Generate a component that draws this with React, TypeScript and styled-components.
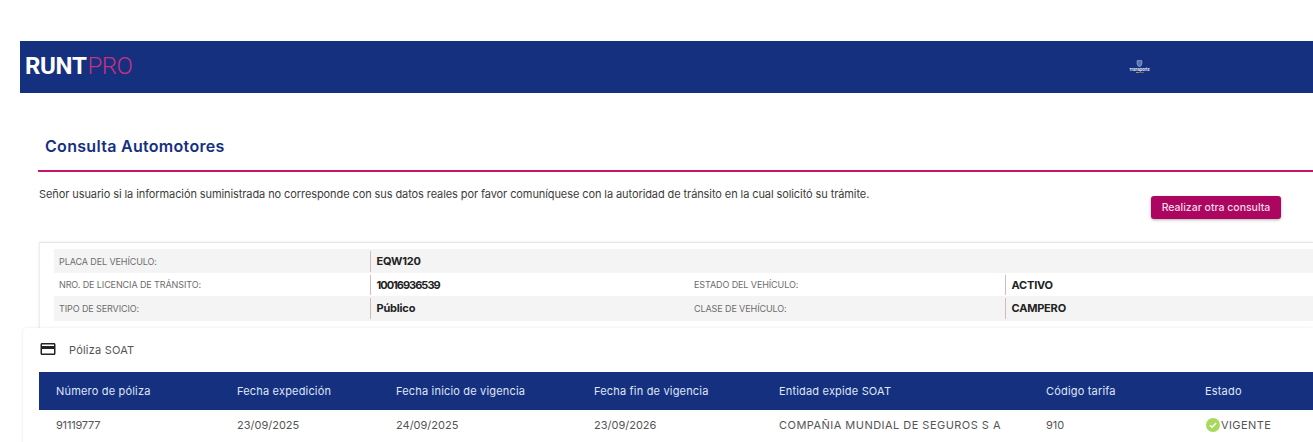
import React from "react";
import styled, { createGlobalStyle } from "styled-components";

const Global = createGlobalStyle`
  html, body { margin: 0; padding: 0; background: #fff; overflow: hidden; }
  body { font-family: Inter, "Open Sans", "Liberation Sans", sans-serif; color: #333; }
`;
const Page = styled.div`
  width: 1313px; height: 442px; overflow: hidden; padding-top: 41px; box-sizing: border-box;
`;
const Header = styled.header`
  margin-left: 20px; height: 52px; background: #163080; display: flex; align-items: center; padding-left: 5px;
`;
const Logo = styled.div`
  font-family: Roboto, sans-serif; font-size: 24px; line-height: 1; width: 1104px; letter-spacing: -0.3px; color: #fff; font-weight: 700; margin-top: -3px;
  span { color: #c8317f; font-weight: 300; letter-spacing: -0.5px; margin-left: 1px; }
`;
const Brand = styled.div`
  display: flex; flex-direction: column; align-items: center; width: 21px; color: #f0f3fb; margin-top: -1px;
  svg { display: block; }
  span { font-size: 3.8px; line-height: 5px; white-space: nowrap; font-weight: 700; }
`;
const Main = styled.main`
  padding: 43px 0 0 38px;
`;
const Title = styled.h1`
  margin: 0 0 0 7px; font-size: 16px; line-height: 20px; font-weight: 600; color: #163080; letter-spacing: 0.3px;
`;
const Rule = styled.div`
  height: 2px; background: #c4156e; margin-top: 14px;
`;
const Notice = styled.div`
  display: flex; padding-left: 1px; height: 70px;
`;
const NoticeText = styled.p`
  margin: 15px 0 0; width: 1112px; font-size: 11px; line-height: 14px; color: #3c3c3c; letter-spacing: -0.09px; white-space: nowrap;
`;
const Action = styled.button`
  margin-top: 24px; width: 130px; height: 23px; padding: 0; border: 0; border-radius: 3px; background: #ad0660; color: #f3dbe8;
  font: 500 10.5px/23px Inter, sans-serif; letter-spacing: 0; box-shadow: 0 1px 3px rgba(0,0,0,.3);
`;
const Card = styled.section`
  margin-left: 1px; height: 86px; border-top: 1px solid #e6e6e6; border-left: 1px solid #eee; padding: 6px 0 0 14px; box-sizing: border-box;
  box-shadow: 0 0 3px rgba(0,0,0,.08);
`;
const Row = styled.div<{ $shaded?: boolean; $h: number; $pb?: number }>`
  display: grid; grid-template-columns: 316px 319px 316px 1fr; height: ${(p) => p.$h}px; align-items: stretch; box-sizing: border-box;
  padding-bottom: ${(p) => p.$pb ?? 0}px;
  background: ${(p) => (p.$shaded ? "#f4f4f4" : "#fff")};
`;
const Label = styled.div`
  padding-left: 5px; font-size: 9px; color: #6d6d6d; display: flex; align-items: center; letter-spacing: -0.1px; white-space: nowrap;
`;
const Value = styled.div<{ $tight?: boolean }>`
  margin: 1.5px 0; padding-left: 5.5px; border-left: 1px solid #d6b9bd; font-size: 11px; font-weight: 700; color: #222; display: flex; align-items: center; white-space: nowrap;
  letter-spacing: ${(p) => (p.$tight ? "-1px" : "-0.2px")};
`;
const Policy = styled.section`
  margin: 0 0 0 -15px; padding: 0 0 30px 16px; border-radius: 4px 0 0 0; background: #fff; box-shadow: 0 0 3px rgba(0,0,0,.1); position: relative;
`;
const PolicyHead = styled.div`
  height: 44px; display: flex; align-items: center; gap: 12px; font-size: 11px; color: #555; letter-spacing: .2px;
  svg { display: block; margin-top: -3px; }
`;
const Table = styled.table`
  border-collapse: collapse; table-layout: fixed; width: 1274px; font-size: 11px;
`;
const Th = styled.th`
  height: 38px; padding: 0 0 0 17px; background: #163080; color: #dfe6f5; font-weight: 400; text-align: left; letter-spacing: .18px; white-space: nowrap;
`;
const Td = styled.td<{ $spacing?: number }>`
  height: 30px; padding: 0 0 0 17px; color: #555; letter-spacing: ${(p) => p.$spacing ?? 0}px; white-space: nowrap;
`;
const Status = styled.span`
  display: flex; align-items: center; gap: 1px; margin-left: 1px; letter-spacing: .4px;
  svg { display: block; }
`;

const widths = [181, 159, 198, 185, 267, 159, 125];
const heads = ["Número de póliza", "Fecha expedición", "Fecha inicio de vigencia", "Fecha fin de vigencia", "Entidad expide SOAT", "Código tarifa", "Estado"];

export default function App() {
  return (
    <Page>
      <Global />
      <Header>
        <Logo>RUNT<span>PRO</span></Logo>
        <Brand>
          <svg width="7" height="7" viewBox="0 0 8 9"><path d="M1 1 L4 0 L7 1 V5 Q6 8 4 9 Q2 8 1 5Z" fill="#5a72b4" stroke="#b9c5e2" strokeWidth=".8" /></svg>
          <span>Transporte</span>
          <svg width="8" height="1" viewBox="0 0 8 1"><rect width="3" height="1" fill="#a89a3c" /><rect x="3" width="2" height="1" fill="#4a6aa8" /><rect x="5" width="3" height="1" fill="#a8505c" /></svg>
        </Brand>
      </Header>
      <Main>
        <Title>Consulta Automotores</Title>
        <Rule />
        <Notice>
          <NoticeText>Señor usuario si la información suministrada no corresponde con sus datos reales por favor comuníquese con la autoridad de tránsito en la cual solicitó su trámite.</NoticeText>
          <Action>Realizar otra consulta</Action>
        </Notice>
        <Card>
          <Row $shaded $h={24}><Label>PLACA DEL VEHÍCULO:</Label><Value>EQW120</Value><div /><div /></Row>
          <Row $h={23}><Label>NRO. DE LICENCIA DE TRÁNSITO:</Label><Value $tight>10016936539</Value><Label>ESTADO DEL VEHÍCULO:</Label><Value>ACTIVO</Value></Row>
          <Row $shaded $h={25} $pb={1}><Label>TIPO DE SERVICIO:</Label><Value>Público</Value><Label>CLASE DE VEHÍCULO:</Label><Value>CAMPERO</Value></Row>
        </Card>
        <Policy>
          <PolicyHead>
            <svg width="18" height="18" viewBox="0 0 24 24" fill="#222"><path d="M20 4H4c-1.11 0-1.99.89-1.99 2L2 18c0 1.11.89 2 2 2h16c1.11 0 2-.89 2-2V6c0-1.11-.89-2-2-2zm0 14H4v-6h16v6zm0-10H4V6h16v2z" /></svg>
            Póliza SOAT
          </PolicyHead>
          <Table>
            <colgroup>{widths.map((w) => <col key={w + "c"} style={{ width: w }} />)}</colgroup>
            <thead><tr>{heads.map((h) => <Th key={h}>{h}</Th>)}</tr></thead>
            <tbody>
              <tr>
                <Td $spacing={-0.2}>91119777</Td><Td>23/09/2025</Td><Td>24/09/2025</Td><Td>23/09/2026</Td>
                <Td $spacing={0.47}>COMPAÑIA MUNDIAL DE SEGUROS S A</Td><Td>910</Td>
                <Td><Status>
                  <svg width="14" height="14" viewBox="0 0 14 14"><circle cx="7" cy="7" r="7" fill="#a6d95c" /><path d="M3.8 7.2 6 9.3 10.2 4.9" fill="none" stroke="#fff" strokeWidth="1.5" /></svg>
                  VIGENTE
                </Status></Td>
              </tr>
            </tbody>
          </Table>
        </Policy>
      </Main>
    </Page>
  );
}
